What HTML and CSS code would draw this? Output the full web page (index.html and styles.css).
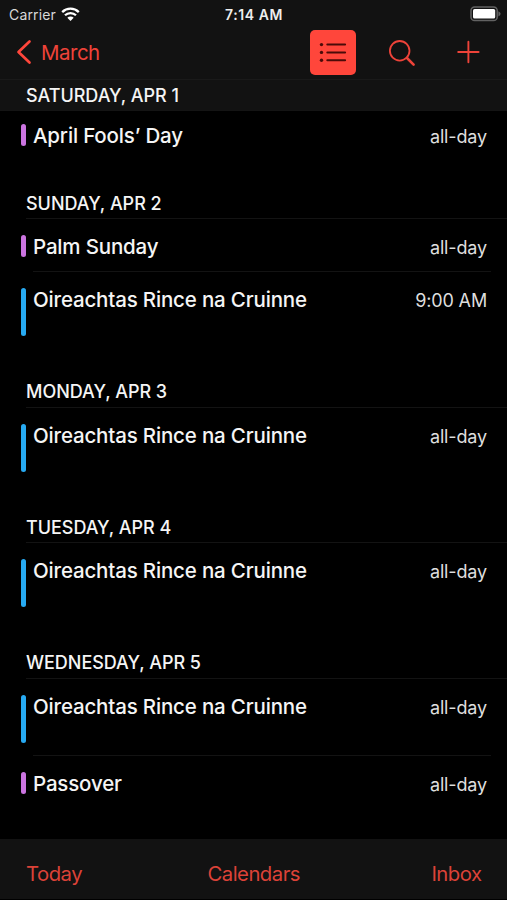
FILE: index.html
```html
<!DOCTYPE html>
<html lang="en">
<head>
<meta charset="utf-8">
<title>Calendar</title>
<link rel="stylesheet" href="styles.css">
</head>
<body>
<div class="app">
  <header class="top">
    <div class="status">
      <div class="carrier"><span>Carrier</span>
        <svg class="wifi" width="19" height="14" viewBox="0 0 19 14"><g fill="none" stroke="#fff" stroke-width="2.3"><path d="M1.2 5.1a11.8 11.8 0 0 1 16.6 0"/><path d="M4 8.3a7.8 7.8 0 0 1 11 0"/></g><path d="M6.3 10.8a4.6 4.6 0 0 1 6.4 0L9.5 14z" fill="#fff"/></svg>
      </div>
      <div class="clock">7:14 AM</div>
      <svg class="battery" width="32" height="16" viewBox="0 0 32 16"><rect x="1" y="1" width="26.2" height="13.6" rx="3.6" fill="none" stroke="#626262" stroke-width="1.5"/><rect x="3" y="3" width="22.2" height="9.6" rx="1.6" fill="#fff"/><path d="M28.4 5.2q2.2 1 2.2 2.6t-2.2 2.6z" fill="#626262"/></svg>
    </div>
    <nav class="nav">
      <a class="back"><svg width="16" height="26" viewBox="0 0 16 26"><path d="M13.5 2.5 2.5 13l11 10.5" fill="none" stroke="#ff463b" stroke-width="2.7" stroke-linecap="round" stroke-linejoin="round"/></svg><span>March</span></a>
      <div class="tools">
        <span class="list-btn"><svg width="46" height="45" viewBox="0 0 46 45"><g fill="#4a0b08"><circle cx="11.5" cy="14.6" r="1.7"/><circle cx="11.5" cy="22.4" r="1.7"/><circle cx="11.5" cy="30.3" r="1.7"/></g><path d="M17.3 14.6h17.8M17.3 22.4h17.8M17.3 30.3h17.8" stroke="#4a0b08" stroke-width="2" stroke-linecap="round"/></svg></span>
        <svg class="search" width="28" height="28" viewBox="0 0 28 28"><circle cx="11.7" cy="11.8" r="9.8" fill="none" stroke="#ee4339" stroke-width="1.8"/><path d="m19 19 6.6 6.6" stroke="#ee4339" stroke-width="2.6" stroke-linecap="round"/></svg>
        <svg class="add" width="24" height="24" viewBox="0 0 24 24"><path d="M12.4 1.8v20.4M2.2 12h20.4" stroke="#ee4339" stroke-width="1.9" stroke-linecap="round"/></svg>
      </div>
    </nav>
  </header>
  <main class="agenda">
    <section class="day first">
      <h2>SATURDAY, APR 1</h2>
      <div class="event short holiday"><i></i><b>April Fools’ Day</b><time>all-day</time></div>
    </section>
    <section class="day sunday">
      <h2>SUNDAY, APR 2</h2>
      <div class="event short holiday ruled"><i></i><b>Palm Sunday</b><time>all-day</time></div>
      <div class="event"><i></i><b>Oireachtas Rince na Cruinne</b><time>9:00 AM</time></div>
    </section>
    <section class="day monday">
      <h2>MONDAY, APR 3</h2>
      <div class="event"><i></i><b>Oireachtas Rince na Cruinne</b><time>all-day</time></div>
    </section>
    <section class="day tuesday">
      <h2>TUESDAY, APR 4</h2>
      <div class="event"><i></i><b>Oireachtas Rince na Cruinne</b><time>all-day</time></div>
    </section>
    <section class="day wednesday">
      <h2>WEDNESDAY, APR 5</h2>
      <div class="event ruled"><i></i><b>Oireachtas Rince na Cruinne</b><time>all-day</time></div>
      <div class="event short holiday"><i></i><b>Passover</b><time>all-day</time></div>
    </section>
  </main>
  <footer class="toolbar"><a>Today</a><a>Calendars</a><a>Inbox</a></footer>
</div>
</body>
</html>
```
FILE: styles.css
```css
* { box-sizing: border-box; }
body { margin: 0; background: #000; color: #f5f5f5; font-family: Inter, "Liberation Sans", sans-serif; }
.app { width: 507px; height: 900px; display: flex; flex-direction: column; overflow: hidden; }
.top { height: 80px; flex: none; background: #121212; border-bottom: 1px solid #1a1a1a; }
.status { height: 28px; display: grid; grid-template-columns: 1fr auto 1fr; align-items: center; padding: 0 6px 0 9px; }
.carrier { display: flex; align-items: center; gap: 5px; font-size: 14px; color: #d8d8d8; letter-spacing: .15px; }
.clock { font-size: 14px; font-weight: 600; letter-spacing: .55px; color: #eee; margin-left: -2px; }
.battery { justify-self: end; margin-right: -1px; }
.nav { height: 51px; display: flex; justify-content: space-between; padding: 0 27px 0 16px; }
.back { display: flex; align-items: center; gap: 9px; height: 48px; font-size: 20.5px; letter-spacing: -.5px; color: #ee4339; }
.tools { display: flex; align-items: flex-start; padding-top: 2px; }
.list-btn { width: 46px; height: 45px; border-radius: 5px; background: #ff463b; }
.list-btn svg { display: block; }
.search { margin: 9px 0 0 32px; }
.add { margin: 10px 0 0 40px; }
.agenda { flex: 1; min-height: 0; }
.first { height: 107px; }
.sunday { height: 189px; }
.monday { height: 135px; }
.tuesday { height: 136px; }
h2 { margin: 0 0 0 26px; height: 32px; padding-top: 1px; border-bottom: 1px solid #131313; font-size: 18px; line-height: 31px; font-weight: 550; letter-spacing: -.03px; }
.monday h2, .wednesday h2 { padding-top: 0; }
.first h2 { margin-left: 0; padding: 0 0 0 26px; height: 31px; background: #121212; border-bottom-color: #141414; }
.event { display: grid; grid-template-columns: 5px 1fr auto; column-gap: 7.5px; height: 77px; padding: 16px 20px 0 20.5px; align-items: start; position: relative; }
.event i { width: 5px; height: 47.5px; border-radius: 3px; background: #27aaf2; }
.event b { font-size: 20.5px; line-height: 24px; font-weight: 550; letter-spacing: -.17px; }
.event time { font-size: 18px; line-height: 26px; letter-spacing: -.15px; color: #dedede; }
.short { height: 53px; }
.first .short { padding-top: 13px; }
.short i { height: 22px; }
.holiday i { background: #cb74e0; }
.ruled::after { content: ""; position: absolute; left: 33px; right: 16px; bottom: 0; height: 1px; background: #131313; }
.toolbar { flex: none; height: 61px; background: #121212; border-bottom: 1px solid #000; display: grid; grid-template-columns: 1fr auto 1fr; padding: 20px 25.5px 0 26px; font-size: 20.3px; letter-spacing: -.5px; line-height: 30px; color: #dc4238; }
.toolbar a:last-child { justify-self: end; }
```
